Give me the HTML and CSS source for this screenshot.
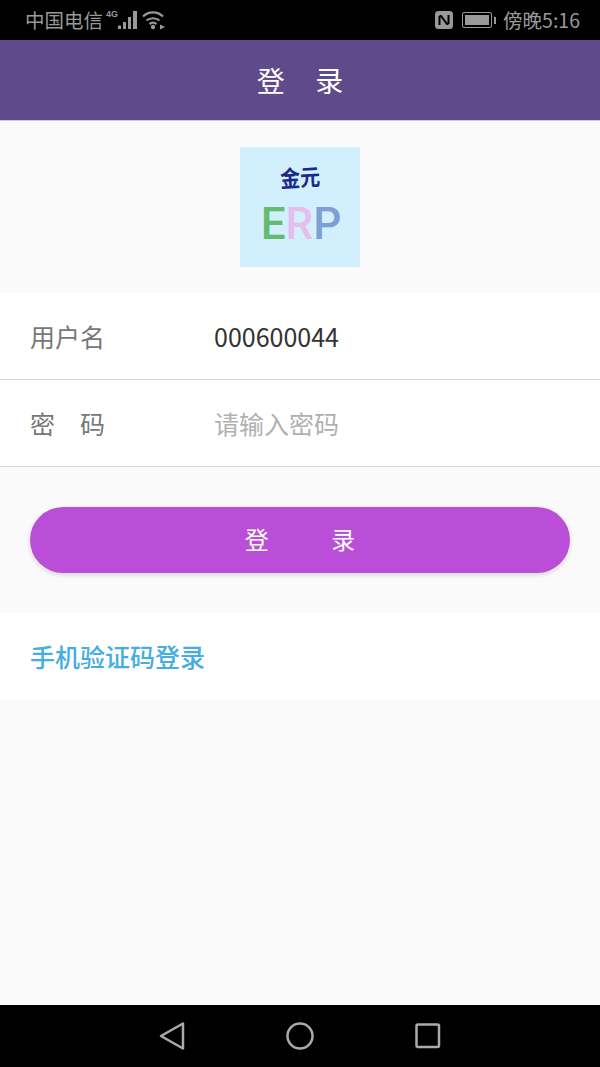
FILE: index.html
```html
<!DOCTYPE html>
<html lang="zh-CN">

<head>
    <meta charset="UTF-8">
    <meta name="viewport" content="width=device-width, initial-scale=1.0">
    <title>登录</title>
    <link rel="stylesheet" href="styles.css">
</head>

<body>
    <div class="status-bar">
        <div class="status-group">
            <span class="carrier">中国电信</span>
            <span class="net-type">4G</span>
            <svg class="signal" width="21" height="20" viewBox="0 0 21 20">
                <rect x="0" y="15.5" width="3" height="3.5" />
                <rect x="5" y="12" width="3" height="7" />
                <rect x="10" y="7" width="3" height="12" />
                <rect x="15" y="1" width="4" height="18" />
            </svg>
            <svg class="wifi" width="24" height="20" viewBox="0 0 24 20">
                <path d="M1 6.5 C6.5 1 15.5 1 21 6.5 M4.5 10.5 C8 7.5 14 7.5 17.5 10.5 M7.5 14 C9.5 12.5 12.5 12.5 14.5 14" fill="none" stroke="#999" stroke-width="2.2" />
                <circle cx="11" cy="17" r="2.2" fill="#999" />
                <path d="M18 14.5 L23 17 L18 19.5 Z" fill="#999" />
            </svg>
        </div>
        <div class="status-group">
            <svg class="nfc" width="18" height="18" viewBox="0 0 18 18">
                <rect width="18" height="18" rx="3.5" fill="#999" />
                <path d="M4.5 5 H6 L12 13 H13.5 M4.5 5 V14 M13.5 13 V4" fill="none" stroke="#000" stroke-width="2" />
            </svg>
            <div class="battery">
                <div class="battery-level"></div>
            </div>
            <div class="battery-tip"></div>
            <span class="clock">傍晚5:16</span>
        </div>
    </div>

    <h1 class="title-bar">登 录</h1>

    <div class="logo-wrap">
        <div class="logo">
            <span class="logo-brand">金元</span>
            <span class="logo-erp"><span class="erp-e">E</span><span class="erp-r">R</span><span class="erp-p">P</span></span>
        </div>
    </div>

    <div class="form-rows">
        <div class="form-row">
            <span class="form-label">用户名</span>
            <span class="form-value">000600044</span>
        </div>
        <div class="form-row">
            <span class="form-label">密　码</span>
            <span class="form-hint">请输入密码</span>
        </div>
    </div>

    <div class="button-wrap">
        <button class="bouton-login">登 录</button>
    </div>

    <div class="sms-row">
        <a class="sms-link" href="#">手机验证码登录</a>
    </div>

    <div class="spacer"></div>

    <div class="nav-bar">
        <svg width="26" height="30" viewBox="0 0 26 30">
            <path d="M24 2.5 L2 15 L24 27.5 Z" fill="none" stroke="#aaa" stroke-width="2.5" stroke-linejoin="round" />
        </svg>
        <svg width="30" height="30" viewBox="0 0 30 30">
            <circle cx="15" cy="15" r="12.5" fill="none" stroke="#aaa" stroke-width="2.5" />
        </svg>
        <svg width="26" height="26" viewBox="0 0 26 26">
            <rect x="1.5" y="1.5" width="22.5" height="22.5" rx="1.5" fill="none" stroke="#aaa" stroke-width="2.5" />
        </svg>
    </div>
</body>

</html>
```

FILE: styles.css
```css
* {
    box-sizing: border-box;
}

body {
    font-family: "Noto Sans CJK SC", "Liberation Sans", sans-serif;
    background-color: #fafafa;
    margin: 0;
    padding: 0;
    width: 600px;
    height: 1067px;
    display: flex;
    flex-direction: column;
    overflow: hidden;
}

.status-bar {
    height: 40px;
    flex: none;
    background-color: #000;
    color: #999;
    display: flex;
    justify-content: space-between;
    align-items: center;
    padding: 0 20px 0 25px;
}

.status-group {
    display: flex;
    align-items: center;
}

.carrier {
    font-size: 19.5px;
    line-height: 40px;
}

.net-type {
    font-family: "Liberation Sans", sans-serif;
    font-size: 9px;
    font-weight: bold;
    margin: 0 0 12px 3px;
}

.signal {
    fill: #999;
}

.wifi {
    margin-left: 3px;
}

.nfc {
    margin-right: 9px;
}

.battery {
    width: 30px;
    height: 16px;
    border: 1px solid #999;
    border-radius: 2px;
    padding: 2px;
}

.battery-level {
    height: 100%;
    background-color: #999;
}

.battery-tip {
    width: 2px;
    height: 7px;
    margin: 0 7px 0 2px;
    background-color: #999;
}

.clock {
    font-size: 19.5px;
    line-height: 40px;
}

.title-bar {
    height: 81px;
    flex: none;
    margin: 0;
    background-color: #5f4b8b;
    color: #fff;
    font-size: 28px;
    font-weight: normal;
    line-height: 80px;
    text-align: center;
    word-spacing: 24px;
    border-bottom: 1px solid #cfc6e0;
}

.logo-wrap {
    height: 172px;
    flex: none;
    display: flex;
    justify-content: center;
    padding-top: 26px;
}

.logo {
    width: 120px;
    height: 120px;
    background-color: #d1effd;
    display: flex;
    flex-direction: column;
    align-items: center;
    padding-top: 17px;
}

.logo-brand {
    font-size: 20px;
    font-weight: bold;
    line-height: 26px;
    color: #1c2a8c;
    transform: scaleY(1.15) rotate(-3deg);
}

.logo-erp {
    font-family: Roboto, sans-serif;
    font-weight: 500;
    font-size: 44px;
    line-height: 50px;
    margin: 9px 0 0 2px;
}

.erp-e {
    color: #63bb6d;
}

.erp-r {
    color: #e6bdec;
}

.erp-p {
    color: #7f9fd4;
}

.form-rows {
    flex: none;
    background-color: #fff;
}

.form-row {
    height: 87px;
    display: flex;
    align-items: center;
    padding-left: 30px;
    border-bottom: 1px solid #d6d6d6;
    font-size: 25px;
}

.form-label {
    width: 184px;
    color: #777;
}

.form-value {
    color: #333;
}

.form-hint {
    color: #b0b0b0;
}

.button-wrap {
    height: 146px;
    flex: none;
    padding: 40px 30px;
}

.bouton-login {
    display: block;
    width: 100%;
    height: 66px;
    padding: 0 0 3px;
    border: none;
    border-radius: 33px;
    background-color: #bb4ed8;
    color: #fff;
    font-family: inherit;
    font-size: 24px;
    word-spacing: 57px;
    box-shadow: 0 2px 5px rgba(0, 0, 0, 0.15);
}

.sms-row {
    height: 87px;
    flex: none;
    display: flex;
    align-items: center;
    padding: 0 0 1px 30px;
    background-color: #fff;
}

.sms-link {
    color: #45ade0;
    font-size: 25px;
    font-weight: 500;
    text-decoration: none;
}

.spacer {
    flex: 1;
}

.nav-bar {
    height: 62px;
    flex: none;
    background-color: #000;
    display: flex;
    align-items: center;
    justify-content: space-between;
    padding: 0 159px;
}
```
